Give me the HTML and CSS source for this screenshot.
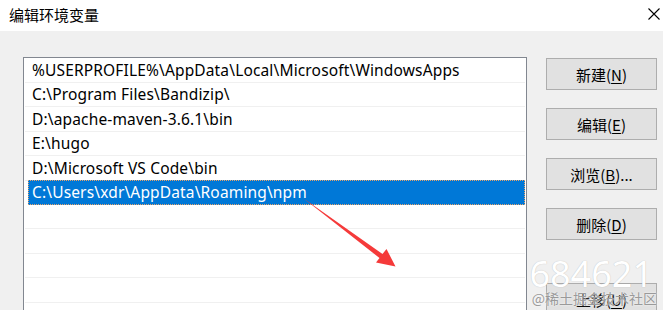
FILE: index.html
```html
<!DOCTYPE html>
<html lang="zh-CN">

<head>
    <meta charset="UTF-8">
    <meta name="viewport" content="width=device-width, initial-scale=1.0">
    <title>编辑环境变量</title>
    <link rel="stylesheet" href="styles.css">
</head>

<body>
    <div class="Dialog">
        <div class="titleBar">
            <p>编辑环境变量</p>
            <svg class="closeIcon" width="12" height="12" viewBox="0 0 12 12">
                <path d="M0.5 0.5 L11.5 11.5 M11.5 0.5 L0.5 11.5" stroke="#000" stroke-width="1.1" fill="none" />
            </svg>
        </div>
        <div class="Content">
            <div class="pathList">
                <div class="Row">%USERPROFILE%\AppData\Local\Microsoft\WindowsApps</div>
                <div class="Row">C:\Program Files\Bandizip\</div>
                <div class="Row">D:\apache-maven-3.6.1\bin</div>
                <div class="Row">E:\hugo</div>
                <div class="Row">D:\Microsoft VS Code\bin</div>
                <div class="Row selected">C:\Users\xdr\AppData\Roaming\npm</div>
                <div class="Row"></div>
                <div class="Row"></div>
                <div class="Row"></div>
                <div class="Row"></div>
                <div class="Row"></div>
            </div>
            <div class="btns">
                <button>新建(<u>N</u>)</button>
                <button>编辑(<u>E</u>)</button>
                <button>浏览(<u>B</u>)...</button>
                <button>删除(<u>D</u>)</button>
                <button class="moveUp">上移(<u>U</u>)</button>
            </div>
        </div>

        <!-- red annotation arrow drawn over the list -->
        <svg class="arrow" width="663" height="310" viewBox="0 0 663 310">
            <polygon points="303,198 382.5,254 386.5,249 395.5,266.5 376,262.5 379.5,258" fill="#f53a3a" />
        </svg>

        <div class="mark">
            <span class="markNum">684621</span>
            <span class="markSite">@稀土掘金技术社区</span>
        </div>
    </div>
</body>

</html>
```

FILE: styles.css
```css
*{
    border: 0px;
    margin: 0px;
    padding: 0px;
    box-sizing: border-box;
}

body {
    width: 663px;
    height: 310px;
    overflow: hidden;
    font-family: "Noto Sans", "Noto Sans CJK SC", sans-serif;
    font-size: 15px;
    color: #000;
}

.Dialog {
    position: relative;
    width: 100%;
    height: 100%;
    overflow: hidden;
    background-color: #f0f0f0;
    display: flex;
    flex-direction: column;
}

.titleBar {
    height: 31px;
    flex-shrink: 0;
    background-color: #fff;
    display: flex;
    align-items: center;
    justify-content: space-between;
    padding-left: 9px;
    padding-right: 3px;
}

.titleBar p {
    font-family: "Noto Sans CJK SC", sans-serif;
    font-size: 15px;
    line-height: 1;
    margin-top: -3px;
}

.closeIcon {
    margin-top: -4px;
}

.Content {
    display: flex;
    align-items: flex-start;
    padding: 26px 0px 0px 23px;
    gap: 19px;
    flex: 1;
    min-height: 0;
}

.pathList {
    width: 504px;
    height: 300px;
    flex-shrink: 0;
    background-color: #fff;
    border: 1px solid #828790;
    display: flex;
    flex-direction: column;
}

.Row {
    height: 24.5px;
    flex-shrink: 0;
    display: flex;
    align-items: center;
    padding-left: 7px;
    margin: 0px 1px;
    border-bottom: 1px solid #f0f0f0;
    white-space: nowrap;
    font-size: 15.5px;
    letter-spacing: 0.15px;
}

.Row.selected {
    margin-left: 4px;
    padding-left: 3px;
    margin-top: -1px;
    height: 25px;
    background-color: #0078d7;
    color: #fff;
    border: 1px dotted #e8a46a;
}

.btns {
    display: flex;
    flex-direction: column;
    gap: 18px;
    padding-top: 1px;
    flex-shrink: 0;
}

.btns > button {
    width: 111px;
    height: 32px;
    background-color: #e1e1e1;
    border: 1px solid #adadad;
    font-family: "Noto Sans CJK SC", sans-serif;
    font-size: 15px;
    color: #000;
}

.btns > button u {
    text-underline-offset: 2px;
}

.btns > .moveUp {
    margin-top: 25px;
}

.arrow {
    position: absolute;
    left: 0px;
    top: 0px;
    pointer-events: none;
}

.mark {
    position: absolute;
    right: 6px;
    bottom: 3px;
    display: flex;
    flex-direction: column;
    align-items: flex-end;
}

.markNum {
    font-family: "Noto Sans", sans-serif;
    font-size: 36px;
    line-height: 30px;
    color: #fff;
    text-shadow: 0px 0px 1px rgba(0, 0, 0, 0.25);
    margin-right: 4px;
}

.markSite {
    font-family: "Noto Sans CJK SC", sans-serif;
    font-size: 14px;
    line-height: 18px;
    color: #9a9a9a;
    text-shadow: 0px 0px 2px #fff;
}
```
